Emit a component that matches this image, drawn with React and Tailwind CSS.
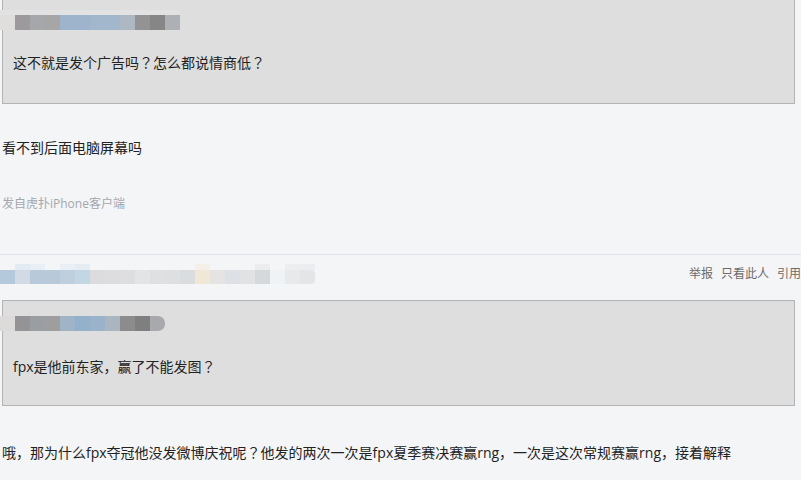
import React from "react";

const font = "font-['Open_Sans','Noto_Sans_CJK_SC',sans-serif]";

const quoteTop = [
  "bg-[#e0dedd]",
  "bg-[#9c9a9c]",
  "bg-[#a5a7aa]",
  "bg-[#a6a6a6]",
  "bg-[#9db4cc]",
  "bg-[#9db4cc]",
  "bg-[#a2b6cc]",
  "bg-[#a2b6cc]",
  "bg-[#adb8c2]",
  "bg-[#939393]",
  "bg-[#868686]",
  "bg-[#adb0b5]",
];

const quoteBottom = [
  "bg-[#dcdbda]",
  "bg-[#949396]",
  "bg-[#9a9ea3]",
  "bg-[#9e9e9f]",
  "bg-[#a0b4c8]",
  "bg-[#93b1cb]",
  "bg-[#9bb3ca]",
  "bg-[#a9b5bf]",
  "bg-[#8c8c8c]",
  "bg-[#7f7f80]",
  "bg-[#a7a9ad] rounded-r-[7px]",
];

const authorTop = [
  "bg-transparent",
  "bg-[#e2ebf4]",
  "bg-[#eaeff5]",
  "bg-transparent",
  "bg-[#eaeff5]",
  "bg-[#e5ecf2]",
  "bg-transparent",
  "bg-transparent",
  "bg-transparent",
  "bg-transparent",
  "bg-transparent",
  "bg-transparent",
  "bg-transparent",
  "bg-[#f4efe7]",
  "bg-transparent",
  "bg-transparent",
  "bg-transparent",
  "bg-[#ececee]",
  "bg-transparent",
  "bg-[#eceef0]",
  "bg-[#ebedf0]",
];

const authorMain = [
  "bg-[#b5c9dd]",
  "bg-[#d2dbe5]",
  "bg-[#b8c9da]",
  "bg-[#b8c9da]",
  "bg-[#bfcfde]",
  "bg-[#c3d6e4]",
  "bg-[#dcdcde]",
  "bg-[#dddddf]",
  "bg-[#dedee0]",
  "bg-[#e2e4e6]",
  "bg-[#dfe0e2]",
  "bg-[#dedfe1]",
  "bg-[#dadde0]",
  "bg-[#f0e7d6]",
  "bg-[#e5e4e2]",
  "bg-[#dde1e5]",
  "bg-[#e1e2e4]",
  "bg-[#d6d9dc]",
  "bg-[#f0f3f6]",
  "bg-[#e8e9eb]",
  "bg-[#e4e5e7] rounded-r-[4px]",
];

// full-width ？ centred in its cell, as in the screenshot
function Text({ children }) {
  const parts = children.split("？");
  return parts.map((p, i) => (
    <React.Fragment key={i}>
      {p}
      {i < parts.length - 1 && (
        <span className="font-['Noto_Sans_CJK_JP',sans-serif]">？</span>
      )}
    </React.Fragment>
  ));
}

function Mosaic({ blocks, height = "h-[15px]" }) {
  return (
    <div className="flex">
      {blocks.map((c, i) => (
        <div key={i} className={`w-[15px] ${height} ${c}`} />
      ))}
    </div>
  );
}

function Quote({ blocks, text, band, className = "" }) {
  return (
    <div
      className={`ml-[2px] w-[793px] border border-[#b3b3b3] bg-[#dedede] pl-[10px] ${
        band ? "pt-[13px] pb-[28px]" : "pt-[15px] pb-[26px]"
      } ${className}`}
    >
      <div className="-ml-[13px]">
        {band && <div className="h-[5px] w-[180px] bg-[#e2e2e2]" />}
        <Mosaic blocks={blocks} />
      </div>
      <p
        className={`${band ? "mt-[20px]" : "mt-[23px]"} text-[14px] leading-[24px] text-[#222]`}
      >
        <Text>{text}</Text>
      </p>
    </div>
  );
}

export default function App() {
  return (
    <div className={`min-h-[480px] w-[801px] overflow-hidden bg-[#f4f5f7] ${font}`}>
      <Quote
        className="-mt-[4px]"
        band
        blocks={quoteTop}
        text="这不就是发个广告吗？怎么都说情商低？"
      />

      <p className="ml-[2px] mt-[32px] text-[14px] leading-[24px] text-[#222]">
        看不到后面电脑屏幕吗
      </p>
      <p className="ml-[2px] mt-[32px] text-[12px] leading-[24px] text-[#a3a7ad]">
        发自虎扑iPhone客户端
      </p>

      <div className="mt-[38px] h-px w-full bg-[#dce3ef]" />

      <div className="mt-[9px] flex items-start justify-between">
        <div>
          <Mosaic blocks={authorTop} height="h-[6px]" />
          <Mosaic blocks={authorMain} height="h-[14px]" />
        </div>
        <div className="mt-[-2px] flex gap-[8px] text-[12px] leading-[24px] text-[#6b6b6b]">
          <span>举报</span>
          <span>只看此人</span>
          <span>引用</span>
        </div>
      </div>

      <Quote
        className="mt-[14px]"
        blocks={quoteBottom}
        text="fpx是他前东家，赢了不能发图？"
      />

      <p className="ml-[2px] mt-[34px] text-[14px] leading-[24px] text-[#222]">
        <Text>
          哦，那为什么fpx夺冠他没发微博庆祝呢？他发的两次一次是fpx夏季赛决赛赢rng，一次是这次常规赛赢rng，接着解释
        </Text>
      </p>
    </div>
  );
}
